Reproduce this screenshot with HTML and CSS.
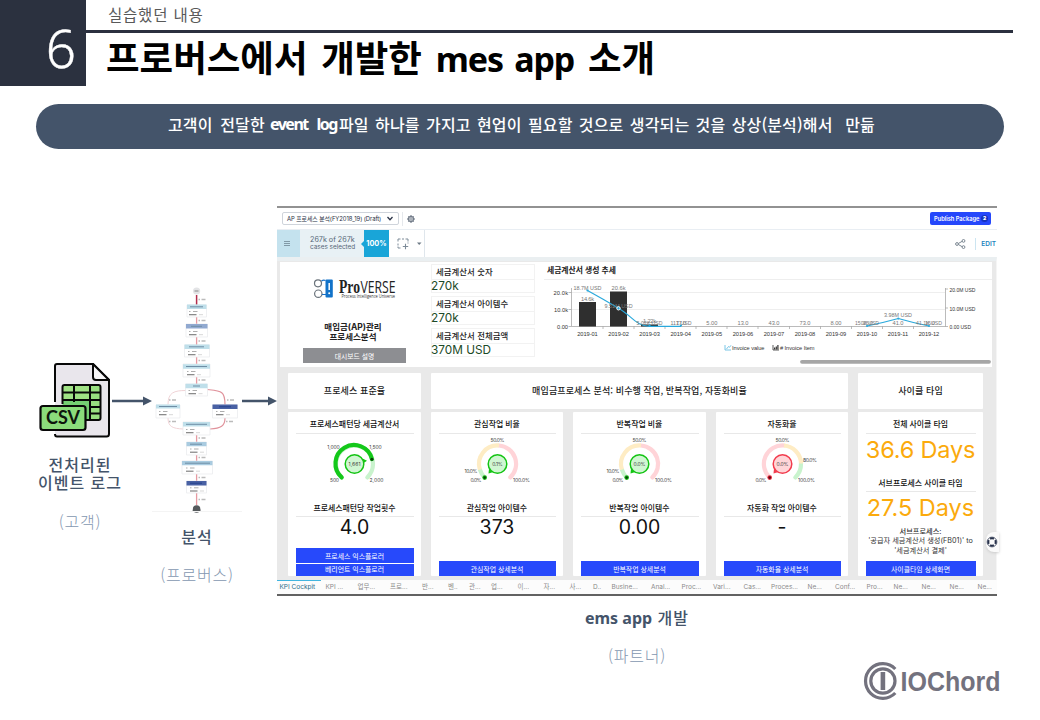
FILE: index.html
```html
<!DOCTYPE html>
<html lang="ko">
<head>
<meta charset="utf-8">
<title>프로버스에서 개발한 mes app 소개</title>
<link rel="stylesheet" href="styles.css">
</head>
<body>
<div class="slide">
  <header class="head">
    <div class="num">6</div>
    <div class="head-text">
      <div class="sub">실습했던 내용</div>
      <h1 class="title">프로버스에서 개발한 <span class="title-latin">mes app</span> 소개</h1>
    </div>
  </header>
  <div class="banner"><span class="b1">고객이 전달한</span><span class="b2">event&nbsp; log</span><span class="b3">파일 하나를 가지고 현업이 필요할 것으로 생각되는 것을 상상(분석)해서&nbsp; 만듦</span></div>

  <main class="flow">
    <section class="source">
      <svg class="csv" viewBox="38 361 74 78">
        <path d="M55 402V366q0-2 2-2h36l16 16v54q0 2.500-2.500 2.500H57q-2 0-2-2.500" fill="#e9e6ec" stroke="#080808" stroke-width="2"/>
        <path d="M93 364v13q0 3 3 3h13z" fill="#f7f6f8" stroke="#080808" stroke-width="2" stroke-linejoin="round"/>
        <rect x="62.500" y="385" width="38" height="35" rx="2" fill="#74cf72"/>
        <path d="M63 385h37v15H63z" fill="#a0e285"/>
        <path d="M91 385h9v34h-9z" fill="#98df80"/>
        <path d="M62.500 404V387q0-2 2-2h34q2 0 2 2v31q0 2-2 2H86M62.500 392.500h38M62.500 400h38M74 385v17M90 385v34M90 407h10M90 413.500h10" fill="none" stroke="#080808" stroke-width="2"/>
        <path d="M53 404h35v28H53z" fill="#e9e6ec" opacity="0"/>
        <rect x="40.500" y="406" width="45" height="24" rx="2.500" fill="#8bdc7b" stroke="#080808" stroke-width="2.200"/>
        <text x="63" y="424.300" class="csv-t" textLength="34">CSV</text>
      </svg>
      <div class="lab lab-src">전처리된<br>이벤트 로그</div>
      <div class="who who-src">(고객)</div>
    </section>
    <svg class="arrow a1" viewBox="0 0 40 10"><path d="M0 3.700h31V.500L40 5l-9 4.500V6.300H0z"/></svg>
    <section class="map-col">
      <svg class="map" viewBox="152 283 90 232">
        <defs>
          <g id="meta"><path d="M0 0h1.500M4 0h4.500" stroke="#999" stroke-width=".8"/><path d="M0 3.200h7.500" stroke="#777" stroke-width="1.100"/><path d="M10 3.200h4" stroke="#ccc" stroke-width=".8"/></g>
          <path id="cnt" d="M0 0h1.500M3 0h4" stroke="#bbb" stroke-width="1.400"/>
        </defs>
        <circle cx="196.600" cy="291" r="3.600" fill="#e3e4e6"/><path d="M194.500 291h4" stroke="#888"/>
        <path d="M196.600 295v10" stroke="#b22c4b" stroke-width="1.500"/>
        <path d="M196.600 317v7M196.600 337v8M196.600 357v8M196.600 377v7M196.600 435v7M196.600 455v6M196.600 474v7M196.600 493v12" stroke="#e69aa2" stroke-width="1.300"/>
        <path d="M186 390.500c-12 0-18 2-18 14M168 418c0 9 5 10.500 15 11" fill="none" stroke="#f0d3d6"/>
        <path d="M207 389.500c14 1.500 18 1 18 15M225 418c0 8-4 10.500-15 11" fill="none" stroke="#e0929b" stroke-width="1.200"/>
        <g fill="#fff" stroke="#e8eaed" stroke-width=".7">
          <path d="M187 305h19.500v12H187zM186 324h21.500v13H186zM184.500 345h25v12h-25zM183 364h27v13h-27zM185.500 384h22v12h-22zM156 405h24v13h-24zM212.500 405h25v13h-25zM183 422h27v13h-27zM186.500 442h20v13h-20zM182 461h30.500v13H182zM186.500 481h20v12h-20z"/>
        </g>
        <g fill="#bfdfea">
          <path d="M187 304.500h19.500v4.500H187zM184.500 344.500h25v4.500h-25zM183 364.300h27v4.500h-27zM185.500 383.700h22v4.500h-22zM156 404.500h24v4h-24zM183 422h27v4.500h-27z"/>
        </g>
        <path fill="#a9cbe0" d="M186.500 442h20v4.300h-20zM182 461h30.500v4.300H182z"/>
        <path fill="#91a9d0" d="M186 324h21.500v4.500H186z"/>
        <path fill="#4961a4" d="M212.500 404.500h25v4.500h-25zM186.500 481h20v4.500h-20z"/>
        <g stroke="#6e8ea5" stroke-width="1">
          <path d="M190 306.800h13M191 326.300h11M189 346.800h15M186 366.500h21M193 386h7M159 406.500h18M186 424.300h21M190 444.200h12M185 463.200h25"/>
        </g>
        <path d="M219 406.800h12M190 483.200h12" stroke="#25408c"/>
        <use href="#meta" x="189" y="311.500"/><use href="#meta" x="189" y="331.500"/><use href="#meta" x="188" y="351.500"/><use href="#meta" x="187" y="371.500"/><use href="#meta" x="188.500" y="390.500"/>
        <use href="#meta" x="159" y="411.500"/><use href="#meta" x="216" y="411.500"/><use href="#meta" x="186" y="429.500"/><use href="#meta" x="190" y="449"/><use href="#meta" x="186" y="468"/><use href="#meta" x="190" y="487.800"/>
        <use href="#cnt" x="198.500" y="299.500"/><use href="#cnt" x="198.500" y="320.500"/><use href="#cnt" x="198.500" y="341"/><use href="#cnt" x="198.500" y="360.500"/><use href="#cnt" x="198.500" y="380"/>
        <use href="#cnt" x="169" y="400"/><use href="#cnt" x="227" y="400"/><use href="#cnt" x="169" y="421.500"/><use href="#cnt" x="226" y="421.500"/><use href="#cnt" x="198.500" y="438"/><use href="#cnt" x="198.500" y="457.500"/><use href="#cnt" x="198.500" y="477.500"/><use href="#cnt" x="198.500" y="499.500"/>
        <path d="M192.600 511a4 4.500 0 0 1 8 0z" fill="#55595c"/><circle cx="196.600" cy="509" r="3.700" fill="#55595c"/>
        <path d="M152 511.500h90" stroke="#f4f4f4"/>
      </svg>
      <div class="lab lab-map">분석</div>
      <div class="who who-map">(프로버스)</div>
    </section>
    <svg class="arrow a2" viewBox="0 0 35 10"><path d="M0 3.700h26V.500L35 5l-9 4.500V6.300H0z"/></svg>

    <section class="app-col">
      <div class="app">
        <div class="bar1">
          <div class="select"><span>AP 프로세스 분석(FY2018_19) (Draft)</span>
            <svg width="6" height="5" viewBox="0 0 6 5"><path d="M.500 1L3 3.700 5.500 1" fill="none" stroke="#2b3347" stroke-width="1.300"/></svg></div>
          <div class="gearbox"><svg width="8" height="8" viewBox="0 0 8 8"><circle cx="4" cy="4" r="2.700" fill="#c8ccd2" stroke="#737c89" stroke-width="1.200"/><circle cx="4" cy="4" r="1.100" fill="#fff" stroke="#737c89" stroke-width=".7"/><path d="M4 0v1M4 7v1M0 4h1M7 4h1M1.200 1.200l.7.700M6.100 6.100l.7.700M1.200 6.800l.7-.7M6.100 1.900l.7-.7" stroke="#737c89"/></svg></div>
          <div class="publish">Publish Package <b class="cnt">2</b></div>
        </div>
        <div class="bar2">
          <div class="burger"><i></i><i></i><i></i></div>
          <div class="cases"><span class="cs1">267k of 267k</span><span class="cs2">cases selected</span></div>
          <div class="pct">100%</div>
          <div class="sel">
            <svg width="32" height="12" viewBox="0 0 32 12"><path d="M1 3.500V1h2.500M5 1h2M8.500 1H11v2.500M1 5.500v2M1 8.500V10h2.500M11 4.500v1" fill="none" stroke="#7d8b98"/><path d="M8.500 5.800v5.400M5.800 8.500h5.400" stroke="#7d8b98" stroke-width="1.100"/><path d="M20 4.500h4.500L22.200 7z" fill="#6d7a86"/></svg>
          </div>
          <div class="tools">
            <svg width="11" height="10" viewBox="0 0 11 10"><g fill="#fff" stroke="#7b8792"><path d="M2.500 5L8 1.800M2.500 5L8 8.200"/><circle cx="2" cy="5" r="1.400"/><circle cx="8.500" cy="1.900" r="1.400"/><circle cx="8.500" cy="8.100" r="1.400"/></g></svg>
            <span class="edit">EDIT</span>
          </div>
        </div>

        <div class="board">
          <div class="top">
            <div class="brand">
              <svg class="pv" viewBox="313 277 86 23">
                <g fill="#fff" stroke="#6a737b" stroke-width="1.200"><circle cx="318" cy="283.300" r="3.500"/><circle cx="318.300" cy="293.700" r="3.700"/></g>
                <path d="M321.500 281q2-1.500 4-.5M322 294.500h5" fill="none" stroke="#1a6fc4" stroke-width="1.200"/>
                <rect x="325.500" y="279.500" width="7.300" height="18" rx="1" fill="#1273c9"/>
                <path d="M329.200 283v7" stroke="#fff" stroke-width="1.500"/><circle cx="329.200" cy="293.300" r="1" fill="#fff"/>
                <text x="339" y="292.500" class="pv1" textLength="21" lengthAdjust="spacingAndGlyphs">Pro</text><text x="360.500" y="292.500" class="pv2" textLength="35" lengthAdjust="spacingAndGlyphs">VERSE</text>
                <text x="341.500" y="298" class="pv3" textLength="53.500" lengthAdjust="spacingAndGlyphs">Process Intelligence Universe</text>
              </svg>
              <div class="pa">매입금(AP)관리<br>프로세스분석</div>
              <div class="desc">대시보드 설명</div>
            </div>
            <div class="kpis">
              <div class="kt">세금계산서 숫자</div><div class="kv">270k</div>
              <div class="kt">세금계산서 아이템수</div><div class="kv">270k</div>
              <div class="kt">세금계산서 전체금액</div><div class="kv">370M USD</div>
            </div>
            <div class="trend">
              <div class="trend-t">세금계산서 생성 추세</div>
              <svg class="chart" viewBox="544 280 448 86">
                <path d="M571 292.500H945M571 309.500H945" stroke="#eeeeee"/>
                <path d="M571.500 288V326.500H945.500V288M568.500 292.500h3M568.500 309.500h3M568.500 326.500h3M945 289h3M945 308h3M945 326.500h3M603 326v3M634 326v3M665 326v3M696 326v3M727 326v3M758 326v3M789.500 326v3M820.500 326v3M851.500 326v3M882.500 326v3M913.500 326v3" fill="none" stroke="#aaa" stroke-width=".8"/>
                <path d="M579 302h17v24.500h-17zM610 291.500h17v35h-17zM641 324.500h17v2h-17z" fill="#2f2f2f"/>
                <g class="ax e"><text x="568" y="295" textLength="14.500">20.0k</text><text x="568" y="312" textLength="14">10.0k</text><text x="568" y="329" textLength="11">0.00</text></g>
                <g class="ax s"><text x="949.500" y="291.500" textLength="26" lengthAdjust="spacingAndGlyphs">20.0M USD</text><text x="949.500" y="310.500" textLength="26" lengthAdjust="spacingAndGlyphs">10.0M USD</text><text x="949.500" y="329" textLength="21.500" lengthAdjust="spacingAndGlyphs">0.00 USD</text></g>
                <g class="ax m">
                  <text x="587.500" y="336" textLength="20.500">2019-01</text><text x="618.600" y="336" textLength="20.500">2019-02</text><text x="649.600" y="336" textLength="20.500">2019-03</text><text x="680.700" y="336" textLength="20.500">2019-04</text><text x="711.800" y="336" textLength="20.500">2019-05</text><text x="743" y="336" textLength="20.500">2019-06</text><text x="774" y="336" textLength="20.500">2019-07</text><text x="805" y="336" textLength="20.500">2019-08</text><text x="836" y="336" textLength="20.500">2019-09</text><text x="867" y="336" textLength="20.500">2019-10</text><text x="898" y="336" textLength="20.500">2019-11</text><text x="929" y="336" textLength="20.500">2019-12</text>
                </g>
                <path d="M587.500 290.500Q603 299 618.500 308.300C632 316 636 326 649.500 326.300H681M867 326q15-3 31.300-7.500Q914 323 929 326" fill="none" stroke="#2aa9dc" stroke-width="1.200"/>
                <g class="dl m">
                  <text x="587.500" y="290" textLength="28" lengthAdjust="spacingAndGlyphs">18.7M USD</text><text x="587.500" y="300.500" textLength="13">14.6k</text><text x="618.600" y="290" textLength="14">20.6k</text><text x="618.600" y="307.500" textLength="28" lengthAdjust="spacingAndGlyphs">9.51M USD</text><text x="649.600" y="325" textLength="26" lengthAdjust="spacingAndGlyphs">5.02K USD</text><text x="649.600" y="322.500" textLength="13">1.22k</text><text x="681" y="325" textLength="21" lengthAdjust="spacingAndGlyphs">117 USD</text><text x="681" y="325" textLength="10">17.0</text><text x="711.800" y="325" textLength="11">5.00</text><text x="743" y="325" textLength="11">13.0</text><text x="774" y="325" textLength="11">43.0</text><text x="805" y="325" textLength="11">73.0</text><text x="836" y="325" textLength="11">8.00</text><text x="867" y="325" textLength="24" lengthAdjust="spacingAndGlyphs">150K USD</text><text x="868" y="325" textLength="10">26.0</text><text x="898" y="317.300" textLength="28" lengthAdjust="spacingAndGlyphs">3.98M USD</text><text x="898" y="325" textLength="11">41.0</text><text x="929" y="325" textLength="26" lengthAdjust="spacingAndGlyphs">41.1K USD</text><text x="930" y="325" textLength="10">16.0</text>
                </g>
                <circle cx="618.500" cy="308.300" r="1.700" fill="#2aa9dc" stroke="#fff"/>
                <g fill="#2aa9dc"><circle cx="587.500" cy="290.500" r="1.100"/><circle cx="649.500" cy="325.500" r="1.100"/><circle cx="681" cy="325.500" r="1.100"/><circle cx="867" cy="326" r="1.100"/><circle cx="898.300" cy="318.500" r="1.100"/><circle cx="929" cy="326" r="1.100"/></g>
                <path d="M725 345v5h6M726.500 349l2-2.500 1 .8 1.500-2" fill="none" stroke="#58b8e0" stroke-width=".8"/>
                <path d="M773 345v5h6" fill="none" stroke="#333" stroke-width=".8"/><path d="M774 349.500v-2h1.200v2zM775.700 349.500v-3h1.200v3zM777.300 349.500V345h1.200v4.500z" fill="#333"/>
                <g class="ax s"><text x="732" y="350" textLength="32.500">Invoice value</text><text x="780" y="350" textLength="34.500"># Invoice Item</text></g>
                <path d="M802 361.800H989" stroke="#a6a6a6" stroke-width="3.800" stroke-linecap="round"/>
              </svg>
            </div>
          </div>

          <div class="bottom">
            <div class="card h">프로세스 표준율</div>
            <div class="card h wide">매입금프로세스 분석: 비수행 작업, 반복작업, 자동화비율</div>
            <div class="card h">사이클 타임</div>

            <div class="card">
              <div class="ct">프로세스패턴당 세금계산서</div>
              <svg class="gauge" viewBox="-66.500 -30 133 66">
                <path d="M-12.800 13.400A18.500 18.500 0 1 1 12.800 13.400" class="trk g0"/>
                <path d="M-12.800 13.400A18.500 18.500 0 1 1 17.400-5" class="trk g1"/>
                <circle cx="17.400" cy="-4.800" r="1.500" fill="#063c06"/>
                <path d="M8-5.500L12.500-3.300 8.500-.500z" fill="#14c414"/><circle r="9.300" class="hub hg"/>
                <text class="gt" y="2" textLength="12">1,661</text>
                <text class="gt" x="-21" y="-15.500" textLength="12.500">1,000</text><text class="gt" x="21" y="-15.500" textLength="12.500">1,500</text><text class="gt" x="-20" y="18" textLength="9">500</text><text class="gt" x="22" y="18" textLength="14">2,000</text>
              </svg>
              <div class="ct c2">프로세스패턴당 작업횟수</div>
              <div class="val">4.0</div>
              <div class="btns"><div class="btn">프로세스 익스플로러</div><div class="btn b-low">베리언트 익스플로러</div></div>
            </div>
            <div class="card">
              <div class="ct">관심작업 비율</div>
              <svg class="gauge" viewBox="-66.500 -30 133 66">
                <path d="M1.500-18.500A18.500 18.500 0 0 1 12.800 13.400" class="trk r0"/><path d="M-12.800 13.400A18.500 18.500 0 0 1-17.600 5.600" class="trk g0"/><path d="M-17.600 5.600A18.500 18.500 0 0 1 1.500-18.500" class="trk y0 flat"/>
                <circle cx="-12.800" cy="13.600" r="2.300" fill="#14b814"/><circle cx="-12.800" cy="13.600" r="1.300" fill="#064406"/>
                <path d="M-8.500 4.500L-9 9.500-4 8z" fill="#14c414"/><circle r="9.300" class="hub hg"/>
                <text class="gt" y="2" textLength="10.500">0.1%</text>
                <text class="gt" y="-22" textLength="14">50.0%</text><text class="gt" x="-26.500" y="8.700" textLength="13">10.0%</text><text class="gt" x="-21.500" y="18" textLength="11">0.0%</text><text class="gt" x="24" y="18" textLength="17">100.0%</text>
              </svg>
              <div class="ct c2">관심작업 아이템수</div>
              <div class="val">373</div>
              <div class="btns"><div class="btn">관심작업 상세분석</div></div>
            </div>
            <div class="card">
              <div class="ct">반복작업 비율</div>
              <svg class="gauge" viewBox="-66.500 -30 133 66">
                <path d="M1.500-18.500A18.500 18.500 0 0 1 12.800 13.400" class="trk r0"/><path d="M-12.800 13.400A18.500 18.500 0 0 1-17.600 5.600" class="trk g0"/><path d="M-17.600 5.600A18.500 18.500 0 0 1 1.500-18.500" class="trk y0 flat"/>
                <circle cx="-12.800" cy="13.600" r="2.300" fill="#14b814"/><circle cx="-12.800" cy="13.600" r="1.300" fill="#064406"/>
                <path d="M-8.500 4.500L-9 9.500-4 8z" fill="#14c414"/><circle r="9.300" class="hub hg"/>
                <text class="gt" y="2" textLength="12">0.0%</text>
                <text class="gt" y="-22" textLength="14">50.0%</text><text class="gt" x="-26.500" y="8.700" textLength="13">10.0%</text><text class="gt" x="-21.500" y="18" textLength="11">0.0%</text><text class="gt" x="24" y="18" textLength="17">100.0%</text>
              </svg>
              <div class="ct c2">반복작업 아이템수</div>
              <div class="val">0.00</div>
              <div class="btns"><div class="btn">반복작업 상세분석</div></div>
            </div>
            <div class="card">
              <div class="ct">자동화율</div>
              <svg class="gauge" viewBox="-66.500 -30 133 66">
                <path d="M-12.800 13.400A18.500 18.500 0 0 1 1.500-18.500" class="trk r0"/><path d="M18.500-.5A18.500 18.500 0 0 1 12.800 13.400" class="trk g0"/><path d="M1.500-18.500A18.500 18.500 0 0 1 18.500-.5" class="trk y0 flat"/>
                <circle cx="-12.800" cy="13.600" r="2.300" fill="#e8283c"/><circle cx="-12.800" cy="13.600" r="1.300" fill="#5c0610"/>
                <path d="M-8.500 4.500L-9 9.500-4 8z" fill="#f23c4e"/><circle r="9.300" class="hub hr"/>
                <text class="gt" y="2" textLength="12">0.0%</text>
                <text class="gt" y="-22" textLength="14">50.0%</text><text class="gt" x="27.500" y="-2.500" textLength="14">80.0%</text><text class="gt" x="-21.500" y="18" textLength="11">0.0%</text><text class="gt" x="24" y="18" textLength="17">100.0%</text>
              </svg>
              <div class="ct c2">자동화 작업 아이템수</div>
              <div class="val">-</div>
              <div class="btns"><div class="btn">자동화율 상세분석</div></div>
            </div>
            <div class="card">
              <div class="ct">전체 사이클 타임</div>
              <div class="days">36.6 Days</div>
              <div class="ct c3">서브프로세스 사이클 타임</div>
              <div class="days d2">27.5 Days</div>
              <div class="note"><b>서브프로세스:</b><br>'공급자 세금계산서 생성(FB01)' to<br>'세금계산서 결제'</div>
              <div class="btns"><div class="btn">사이클타임 상세화면</div></div>
            </div>
          </div>
          <div class="help"><svg width="12" height="12" viewBox="-6 -6 12 12"><circle r="3.700" fill="none" stroke="#26304a" stroke-width="2"/><path d="M-4-4L-2-2M4-4L2-2M-4 4L-2 2M4 4L2 2" stroke="#fff" stroke-width="1.800"/><circle r="4.900" fill="none" stroke="#26304a" stroke-width=".7"/></svg></div>
        </div>
        <nav class="tabs"><span class="on">KPI Cockpit</span><span>KPI ...</span><span>업무...</span><span>프로...</span><span>반...</span><span>벤..</span><span>관...</span><span>업...</span><span>이...</span><span>자...</span><span>사...</span><span>D..</span><span>Busine...</span><span>Anal...</span><span>Proc...</span><span>Vari...</span><span>Cas...</span><span>Proces...</span><span>Ne...</span><span>Conf...</span><span>Pro...</span><span>Ne...</span><span>Ne...</span><span>Ne...</span><span>Ne...</span></nav>
      </div>
      <div class="lab lab-app"><b>ems app</b> 개발</div>
      <div class="who who-app">(파트너)</div>
    </section>
  </main>
  <footer class="foot">
    <svg class="logo" viewBox="862 660 140 42">
      <g fill="none" stroke="#73727e" stroke-width="3.200"><path d="M895.300 669A17.300 17.300 0 1 0 895.300 693"/><circle cx="882.900" cy="681" r="12.100"/></g>
      <path d="M880.600 672h4.600v18h-4.600z" fill="#73727e"/>
      <text x="900.500" y="690.500" class="logo-t" textLength="100" lengthAdjust="spacingAndGlyphs">IOChord</text>
    </svg>
  </footer>
</div>
</body>
</html>
```
FILE: styles.css
```css
* { box-sizing: border-box; }
body { margin: 0; background: #fff; font-family: "Noto Sans", "Noto Sans CJK KR", sans-serif; }
.slide { width: 1040px; height: 720px; overflow: hidden; display: flex; flex-direction: column; white-space: nowrap; }
svg { display: block; flex: none; overflow: visible; }

.head { display: flex; height: 86px; flex: none; }
.num { width: 86px; background: #2b313f; color: #fff; font: 300 53px/76px "Noto Sans", "Open Sans", sans-serif; text-align: right; padding: 10px 10px 0 0; -webkit-text-stroke: .4px #fff; }
.head-text { width: 927px; }
.sub { height: 33px; border-bottom: 3px solid #2b303f; padding-left: 22px; font: 15.500px/29px "Noto Sans CJK KR", sans-serif; letter-spacing: .8px; color: #595959; }
.title { margin: 0; padding-left: 20px; font: 700 36.500px/48px "Noto Sans CJK KR", sans-serif; word-spacing: 3.500px; color: #000; }
.title-latin { font-family: "Noto Sans", sans-serif; font-size: 34px; letter-spacing: -1.100px; }

.banner { flex: none; margin: 18px 36px 0; height: 45px; border-radius: 23px; background: #44546a; color: #fff; display: flex; padding-left: 132px; font: 500 16px/41px "Noto Sans CJK KR", sans-serif; letter-spacing: .15px; word-spacing: 1.700px; }
.b1 { width: 102px; word-spacing: 3px; }
.b2 { width: 69px; font-family: "Noto Sans", sans-serif; font-weight: 700; letter-spacing: -1.500px; }

.flow { flex: none; height: 508px; display: flex; align-items: flex-start; padding-left: 36px; }
.source { width: 76px; padding-top: 212px; }
.csv { width: 74px; height: 78px; margin-left: 2px; }
.csv-t { font: 700 18px Lato, sans-serif; text-anchor: middle; fill: #0d160d; }
.lab { color: #44546a; font: 500 16px/18px "Noto Sans CJK KR", sans-serif; letter-spacing: 1px; text-align: center; }
.lab b { font-family: "Noto Sans", sans-serif; letter-spacing: 0; }
.who { color: #8497b0; font: 300 16px/20px "Noto Sans CJK KR", sans-serif; letter-spacing: .8px; text-align: center; }
.lab-src { margin: 16px -12px 0 0; }
.who-src { margin: 20px -12px 0 0; }
.arrow { fill: #44546a; height: 10px; margin-top: 247px; }
.a1 { width: 40px; }
.a2 { width: 35px; }
.map-col { width: 90px; padding-top: 134px; }
.map { width: 90px; height: 232px; filter: blur(.4px); }
.lab-map { margin-top: 12px; }
.who-map { margin-top: 19px; }

.app-col { width: 720px; padding-top: 57px; }
.lab-app { margin-top: 12px; }
.who-app { margin-top: 18px; }
.app { height: 390px; border-top: 2px solid #929292; border-bottom: 2px solid #626262; display: flex; flex-direction: column; background: #fff; color: #222; font-family: Inter, "Noto Sans CJK KR", sans-serif; }
.bar1 { height: 22px; border-bottom: 1px solid #e9eef3; display: flex; align-items: center; padding-left: 5px; flex: none; }
.select { width: 117px; height: 13px; border: 1px solid #cfd4db; border-radius: 2px; display: flex; align-items: center; justify-content: space-between; padding: 0 5px 0 4px; font-size: 5.900px; letter-spacing: -.08px; color: #273043; }
.gearbox { height: 14px; border-left: 1px solid #e5e8ec; margin-left: 3px; padding: 3px 0 0 4px; }
.publish { margin-left: auto; margin-right: 6px; width: 61px; height: 13px; border-radius: 2px; background: #2547fb; color: #fff; font: 600 5.700px/13px Inter, sans-serif; display: flex; align-items: center; justify-content: space-between; padding: 0 3px 0 4px; }
.cnt { background: #1531bd; border-radius: 4px; width: 7px; line-height: 7px; text-align: center; font-size: 5px; }
.bar2 { height: 27px; display: flex; flex: none; }
.burger { width: 23px; background: #c4e2ee; display: flex; flex-direction: column; gap: 1px; align-items: center; justify-content: center; padding-right: 3px; }
.burger i { width: 6px; height: 1px; background: #8199a6; }
.cases { width: 64px; background: #e8f1f5; display: flex; flex-direction: column; padding: 6px 0 0 10px; color: #566777; }
.cs1 { font-size: 7.200px; line-height: 8px; }
.cs2 { font-size: 6.400px; line-height: 7px; }
.pct { width: 25px; background: #19a5d8; color: #fff; font: 700 7.300px/27px Inter, sans-serif; text-align: center; position: relative; }
.pct::before { content: ""; position: absolute; left: -3px; top: 11px; border: 3px solid transparent; border-left: 0; border-right-color: #19a5d8; }
.sel { width: 36px; border-right: 1px solid #dfe6ec; padding: 8px 0 0 8px; }
.tools { margin-left: auto; display: flex; align-items: center; gap: 9px; height: 27px; padding-right: 1px; }
.edit { border-left: 1px solid #cce5f1; padding-left: 5px; font: 600 6.500px/12px Inter, sans-serif; color: #2184bd; }

.board { flex: 1; background: #e9e9e9; border-top: 4px solid #eaeff1; padding: 1px 4px 0 3px; position: relative; border-right: 1px solid #f5f5f5; }
.top { height: 105px; background: #fff; display: flex; }
.brand { width: 151px; padding-top: 15px; }
.pv { width: 86px; height: 23px; margin-left: 33px; }
.pv1 { font: 700 18px "Liberation Serif", serif; fill: #222; }
.pv2 { font: 17px "Open Sans", sans-serif; fill: #222; }
.pv3 { font: 4.800px "Open Sans", sans-serif; fill: #333; }
.pa { margin-top: 22px; width: 146px; text-align: center; font: 700 8.500px/10px Inter, "Noto Sans CJK KR", sans-serif; }
.desc { margin: 6px 0 0 23px; width: 103px; height: 15px; background: #8d8e92; color: #fff; font: 6.800px/16px "Noto Sans CJK KR", sans-serif; text-align: center; }
.kpis { width: 104px; padding-top: 2px; }
.kt { height: 16px; border: 1px solid #f2f2f2; padding-left: 4px; font: 500 8.400px/13px "Noto Sans CJK KR", sans-serif; color: #222; letter-spacing: .05px; }
.kv { height: 13px; margin-bottom: 3px; border: 1px solid #f2f2f2; border-top: 0; padding: 0; text-indent: -1px; font: 11.800px/12px Inter, sans-serif; color: #1d4a27; }
.trend { width: 448px; margin-left: 9px; }
.trend-t { height: 18px; border-bottom: 1px solid #eee; padding-left: 3px; font: 700 7.800px/16px "Noto Sans CJK KR", sans-serif; }
.chart { width: 448px; height: 86px; }
.ax { font: 5.700px "Liberation Sans", sans-serif; fill: #333; }
.dl { font: 5.700px "Liberation Sans", sans-serif; fill: #777; }
.e { text-anchor: end; }
.s { text-anchor: start; }
.m { text-anchor: middle; }

.bottom { display: grid; grid-template-columns: 133px 132px 133px 132px 125px; grid-template-rows: 36px 164px; column-gap: 10px; row-gap: 3px; padding: 6px 0 0 8px; }
.card { background: #fff; display: flex; flex-direction: column; padding: 0 7.500px; border-radius: 1px; }
.card.h { font: 500 9px/35px "Noto Sans CJK KR", sans-serif; letter-spacing: .12px; text-align: center; padding: 0; display: block; }
.wide { grid-column: span 3; }
.ct { height: 22px; border-bottom: 1px solid #e8e8e8; font: 500 7.900px/24px "Noto Sans CJK KR", sans-serif; text-align: center; color: #111; flex: none; }
.gauge { width: 133px; height: 66px; margin-left: -7.500px; }
.c2 { height: 17px; line-height: 15px; }
.val { font: 19.500px/21px Inter, sans-serif; text-align: center; color: #111; flex: none; }
.btns { margin-top: auto; display: flex; flex-direction: column; gap: 1px; }
.btn { height: 15px; background: #2749fb; color: #fff; font: 6.900px/17px "Noto Sans CJK KR", sans-serif; text-align: center; }
.b-low { height: 12px; line-height: 11px; }
.days { font: 23.500px/32px Inter, sans-serif; color: #fbaa0c; text-align: center; height: 36px; flex: none; margin: 0 -6px; letter-spacing: -.2px; }
.c3 { line-height: 25px; height: 22px; }
.d2 { height: 30px; letter-spacing: 0; }
.note { font: 7.200px/9.300px Inter, "Noto Sans CJK KR", sans-serif; text-align: center; margin: 5px -8px 0; color: #333; }
.note b { font-weight: 500; }
.trk { fill: none; stroke-width: 4.200; stroke-linecap: round; }
.flat { stroke-linecap: butt; }
.g0 { stroke: #c9f3cd; }
.g1 { stroke: #14c81a; }
.y0 { stroke: #feecc4; }
.r0 { stroke: #ffd4d8; }
.hub { stroke-width: 1.500; }
.hg { fill: #d0f6d2; stroke: #14c414; }
.hr { fill: #ffd5d8; stroke: #f23c4e; }
.gt { font: 5px Inter, sans-serif; fill: #444; text-anchor: middle; }
.help { position: absolute; right: -3px; top: 271px; width: 13px; height: 20px; background: #fafafa; border-radius: 8px 0 0 8px; padding-top: 4px; box-shadow: 0 1px 3px #ccc; }
.tabs { flex: none; height: 14px; display: grid; grid-template-columns: 46px 32px 32.500px 32px 26px 21px 22px 26.500px 26px 26px 23.500px 18.500px 39.500px 30.500px 31.500px 30.500px 27.500px 36.500px 27.500px 31.500px 27px 28px 28px 28px 17px; padding-left: 2.500px; font: 6.500px/14px Inter, "Noto Sans CJK KR", sans-serif; color: #8b8b8b; background: #fcfcfc; }
.on { color: #2c6f8a; border-top: 1.500px solid #42b5df; margin-left: -2.500px; padding-left: 2.500px; width: 43.500px; height: 14px; line-height: 12px; }

.foot { padding: 3px 0 0 862px; }
.logo { width: 140px; height: 42px; }
.logo-t { font: 700 27px "Liberation Sans", sans-serif; fill: #73727e; }
```
